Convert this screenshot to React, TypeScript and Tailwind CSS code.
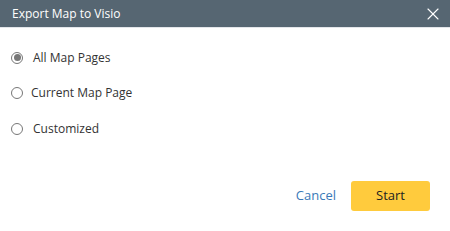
import { X } from "lucide-react";

const options = [
  { label: "All Map Pages", checked: true, gap: "ml-[10px]" },
  { label: "Current Map Page", checked: false, gap: "ml-[8px]" },
  { label: "Customized", checked: false, gap: "ml-[10px]" },
];

export default function App() {
  return (
    <div className="w-[450px] h-[231px] bg-white flex flex-col font-['Open_Sans',sans-serif] text-[#333]">
      {/* Header */}
      <div className="h-[28px] bg-[#566672] flex items-center justify-between pl-[12px] pr-[7px] border-b border-[#e3e6ea]">
        <span className="text-white text-[12px] font-medium">Export Map to Visio</span>
        <X className="w-[20px] h-[20px] text-white" strokeWidth={1.3} />
      </div>

      {/* Options */}
      <div className="flex flex-col pt-[19px] pl-[11px] gap-[14.5px]">
        {options.map((o) => (
          <label key={o.label} className="flex items-center h-[21px]">
            <span className="w-[12px] h-[12px] rounded-full border border-[#777] flex items-center justify-center">
              {o.checked && <span className="w-[7px] h-[7px] rounded-full bg-[#777]" />}
            </span>
            <span className={`${o.gap} text-[12px]`}>{o.label}</span>
          </label>
        ))}
      </div>

      {/* Footer */}
      <div className="mt-auto flex items-center justify-end gap-[15px] pr-[20px] pb-[20px]">
        <button className="text-[13px] text-[#3a7ab8]">Cancel</button>
        <button className="w-[79px] h-[30px] rounded-[3px] bg-[#ffcb3d] text-[13px] text-[#222]">Start</button>
      </div>
    </div>
  );
}
